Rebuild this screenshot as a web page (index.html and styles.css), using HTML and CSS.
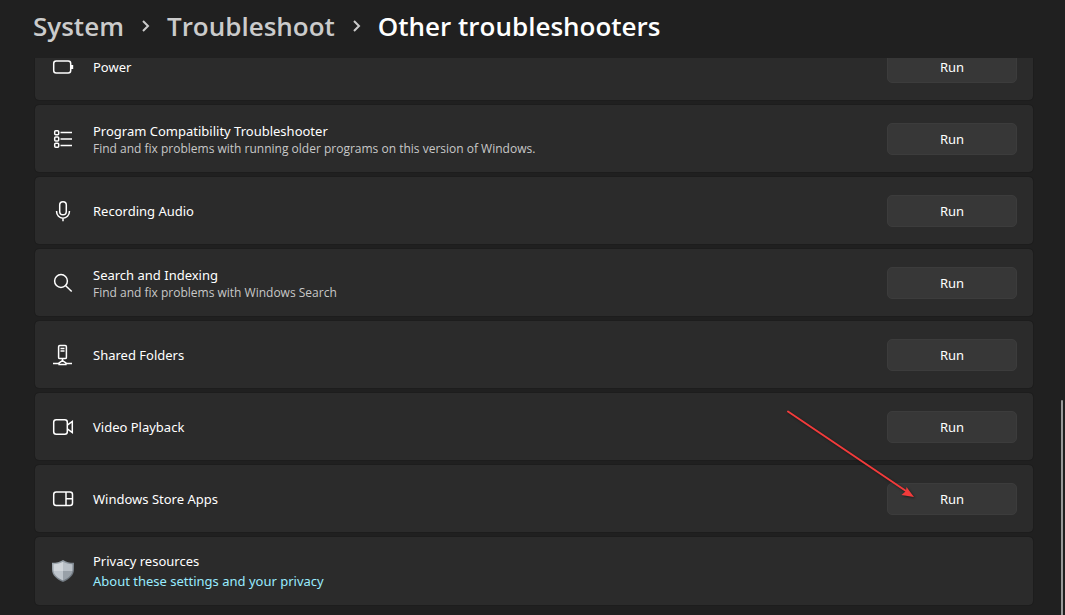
FILE: index.html
```html
<!DOCTYPE html>
<html lang="en">
<head>
  <meta charset="UTF-8">
  <meta name="viewport" content="width=device-width, initial-scale=1.0">
  <title>Other troubleshooters</title>
  <link rel="stylesheet" href="styles.css">
</head>
<body>
  <nav class="breadcrumb">
    <a href="#system">System</a>
    <svg class="chevron" width="11" height="12" viewBox="0 0 11 12"><path d="M3 1l5 5-5 5"/></svg>
    <a href="#troubleshoot">Troubleshoot</a>
    <svg class="chevron" width="11" height="12" viewBox="0 0 11 12"><path d="M3 1l5 5-5 5"/></svg>
    <h1>Other troubleshooters</h1>
  </nav>

  <main class="scroll-area">
    <div class="list">
      <section class="card">
        <svg class="icon" width="22" height="22" viewBox="0 0 22 22"><rect x="1.7" y="5" width="17" height="12" rx="2.5"/><path d="M20 9v4" stroke-width="2.4"/></svg>
        <div class="text"><h2>Power</h2></div>
        <button type="button">Run</button>
      </section>

      <section class="card">
        <svg class="icon" width="22" height="22" viewBox="0 0 22 22"><rect x="2.700" y="2.700" width="4" height="4" rx="1"/><rect x="2.700" y="9" width="4" height="4" rx="1"/><rect x="2.700" y="15.300" width="4" height="4" rx="1"/><path d="M8.500 4.500H20M8.500 11H20M8.500 17.500H20"/></svg>
        <div class="text two-line">
          <h2>Program Compatibility Troubleshooter</h2>
          <p>Find and fix problems with running older programs on this version of Windows.</p>
        </div>
        <button type="button">Run</button>
      </section>

      <section class="card">
        <svg class="icon" width="22" height="22" viewBox="0 0 22 22"><rect x="7.700" y="1.700" width="6.600" height="13" rx="3.300"/><path d="M4.600 11v.8a6.400 6.400 0 0 0 12.800 0V11M11 18.200v3"/></svg>
        <div class="text"><h2>Recording Audio</h2></div>
        <button type="button">Run</button>
      </section>

      <section class="card">
        <svg class="icon" width="22" height="22" viewBox="0 0 22 22"><circle cx="9" cy="9" r="6.400"/><path d="M13.700 13.700l6 5.800"/></svg>
        <div class="text two-line">
          <h2>Search and Indexing</h2>
          <p>Find and fix problems with Windows Search</p>
        </div>
        <button type="button">Run</button>
      </section>

      <section class="card">
        <svg class="icon" width="22" height="22" viewBox="0 0 22 22"><rect x="6.600" y="1.600" width="7.800" height="13" rx="1.200"/><path d="M8.500 4.500h4M8.500 7h4M10.500 14.600v2M1 19.500h5.600M14.400 19.500H20M10.500 16.600l-3.400 2.200v1.600h6.800v-1.600z"/></svg>
        <div class="text"><h2>Shared Folders</h2></div>
        <button type="button">Run</button>
      </section>

      <section class="card">
        <svg class="icon" width="22" height="22" viewBox="0 0 22 22"><rect x="1.700" y="3.700" width="13.600" height="14.600" rx="2.500"/><path d="M15.300 9.200l5-3.700v11l-5-3.700"/></svg>
        <div class="text"><h2>Video Playback</h2></div>
        <button type="button">Run</button>
      </section>

      <section class="card">
        <svg class="icon" width="22" height="22" viewBox="0 0 22 22"><rect x="1.700" y="4" width="18.800" height="13.500" rx="2.500"/><path d="M14 4v13.500M14 10.700h6.500"/></svg>
        <div class="text"><h2>Windows Store Apps</h2></div>
        <button type="button">Run</button>
        <svg class="arrow" width="140" height="100" viewBox="0 0 140 100">
          <path class="arrow-line" d="M8 6.500L126 86"/>
          <path class="arrow-head" d="M134 92l-7.500-10-.5 4-4.500 4z"/>
        </svg>
      </section>

      <section class="card">
        <svg class="shield" width="22" height="22" viewBox="0 0 22 22">
          <defs>
            <linearGradient id="shield-rim" x1="0" y1="0" x2="1" y2="1">
              <stop offset="0" stop-color="#a9b2ba"/>
              <stop offset="1" stop-color="#5d656d"/>
            </linearGradient>
          </defs>
          <path fill="url(#shield-rim)" d="M11 0c3 2 6.500 2.800 11 2.800v6.500c0 6-4.500 10-11 12.700C4.500 19.300 0 15.300 0 9.300V2.800C4.500 2.800 8 2 11 0z"/>
          <path fill="#d0d5da" d="M11 1.800V11H1.500V4.200C5.200 4.200 8.300 3.400 11 1.800z"/>
          <path fill="#b9c0c7" d="M11 1.800V11h9.500V4.200c-3.700 0-6.800-.8-9.500-2.400z"/>
          <path fill="#bdc4cb" d="M1.500 11H11v9.400C5.500 18 2.100 15 1.500 11z"/>
          <path fill="#98a0a8" d="M20.500 11H11v9.400c5.500-2.400 8.900-5.400 9.500-9.400z"/>
        </svg>
        <div class="text privacy">
          <h2>Privacy resources</h2>
          <a href="#privacy">About these settings and your privacy</a>
        </div>
      </section>
    </div>
  </main>

  <div class="scroll-thumb"></div>
</body>
</html>
```

FILE: styles.css
```css
* {
  margin: 0;
  padding: 0;
  box-sizing: border-box;
  font-family: "Noto Sans", "Open Sans", sans-serif;
}

body {
  display: flex;
  flex-direction: column;
  height: 100vh;
  overflow: hidden;
  background: #202020;
  color: #fff;
}

.breadcrumb {
  display: flex;
  align-items: center;
  gap: 16px;
  height: 58px;
  padding: 0 33px 7px;
  flex-shrink: 0;
}

.breadcrumb a,
.breadcrumb h1 {
  font-family: "Open Sans", sans-serif;
  font-size: 26px;
  font-weight: 600;
  line-height: 36px;
  white-space: nowrap;
}

.breadcrumb a {
  color: #cbcbcb;
  text-decoration: none;
}

.chevron {
  fill: none;
  stroke: #cbcbcb;
  stroke-width: 2;
}

.scroll-area {
  flex: 1;
  overflow: hidden;
}

/* list is scrolled down, the first card is partly hidden */
.list {
  display: flex;
  flex-direction: column;
  gap: 3px;
  margin-top: -26px;
  padding: 0 31px 0 34px;
}

.card {
  position: relative;
  display: flex;
  align-items: center;
  min-height: 69px;
  padding: 0 16px 0 17px;
  background: #2b2b2b;
  background-clip: padding-box;
  border: 1px solid #1d1d1d;
  border-radius: 5px;
}

.card:last-child {
  min-height: 70px;
}

.icon {
  fill: none;
  stroke: #fff;
  stroke-width: 1.5;
}

.text {
  flex: 1;
  margin-left: 19px;
}

.two-line {
  padding-top: 2px;
}

.text h2 {
  font-size: 13px;
  font-weight: 400;
  line-height: 18px;
}

.text p {
  font-family: "Open Sans", sans-serif;
  font-size: 12px;
  line-height: 18px;
  color: #c8c8c8;
}

.text a {
  display: block;
  font-size: 13px;
  line-height: 20px;
  color: #99ebff;
  text-decoration: none;
}

.privacy h2 {
  line-height: 20px;
}

.card button {
  width: 130px;
  height: 32px;
  background: #373737;
  border: 1px solid #3c3c3c;
  border-radius: 5px;
  color: #fff;
  font-size: 13px;
}

.card button:hover {
  background: #3d3d3d;
}

.arrow {
  position: absolute;
  top: -60px;
  right: 113px;
  pointer-events: none;
  filter: drop-shadow(1px 1px 1px rgba(0, 0, 0, 0.5));
}

.arrow-line {
  fill: none;
  stroke: #f23b3b;
  stroke-width: 2;
  stroke-linecap: round;
}

.arrow-head {
  fill: #f23b3b;
}

.scroll-thumb {
  position: absolute;
  top: 65%;
  right: 2px;
  bottom: 0;
  width: 2px;
  background: #9a9a9a;
  border-radius: 1px 1px 0 0;
}
```
